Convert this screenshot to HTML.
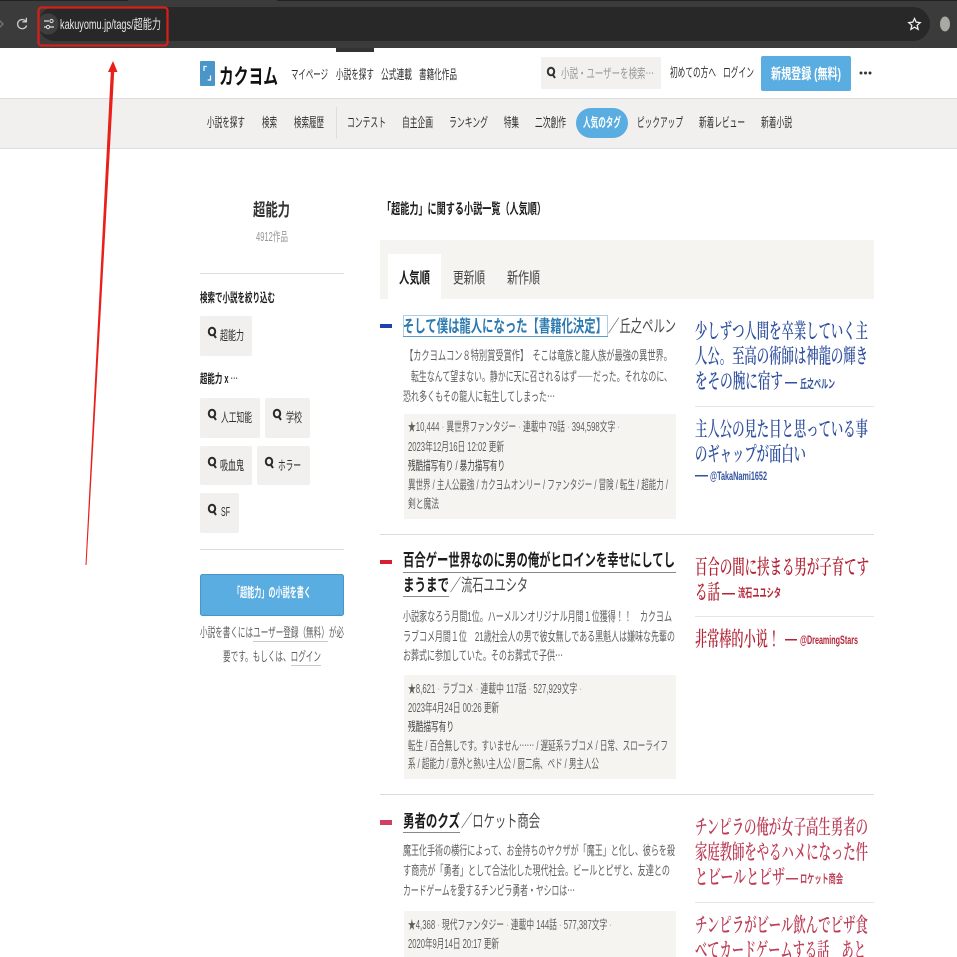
<!DOCTYPE html>
<html lang="ja"><head><meta charset="utf-8"><title>超能力 - カクヨム</title>
<style>
html,body{margin:0;padding:0;background:#fff;width:957px;height:957px;overflow:hidden}
svg{display:block;filter:blur(.3px)}
text{font-family:"Liberation Sans","Noto Sans CJK JP",sans-serif;font-size:13px;fill:#444;white-space:pre}
.n{font-size:13px;fill:#2e2e2e}
.s{font-size:13px;fill:#5e5e5e}
.m{font-size:12.5px;fill:#5e5e5e}
.b{font-weight:700;fill:#1c1c1c}
.a{font-size:17px;fill:#4a4a4a}
.q{font-family:"Noto Serif CJK SC","Liberation Serif",serif;font-size:20.5px;font-weight:600}
.bl{fill:#32529f}.re{fill:#b32536}.pk{fill:#bd3f58}
.u{font-size:12px;font-weight:700}
.w{fill:#fff;font-weight:700}
.c{font-family:"Noto Sans CJK JP",sans-serif}
.d{fill:#a8a8a8}
</style></head><body>
<svg xmlns="http://www.w3.org/2000/svg" width="957" height="957" viewBox="0 0 957 957">
<!-- browser chrome -->
<rect width="957" height="48" fill="#3b3b3b"/>
<rect x="0" y="0" width="128" height="1" fill="#222"/><rect x="277" y="0" width="680" height="1" fill="#222"/>
<rect x="38" y="7" width="892" height="34" rx="17" fill="#282828"/>
<path d="M-1 20l4 4-4 4" fill="none" stroke="#777" stroke-width="1.3"/>
<path d="M26 21.500a4.600 4.600 0 1 0 .6 4M26.400 17.800v4h-4" fill="none" stroke="#ccc" stroke-width="1.3"/>
<circle cx="48" cy="24" r="10.500" fill="#3e3e3e"/>
<path d="M44 21h5M50 27h4M44 27h2" stroke="#ddd" stroke-width="1.2"/><circle cx="51.500" cy="21" r="1.600" fill="none" stroke="#ddd"/><circle cx="48" cy="27" r="1.600" fill="none" stroke="#ddd"/>
<text x="60" y="29" textLength="101" lengthAdjust="spacingAndGlyphs" style="font-size:13.500px;fill:#e6e6e6">kakuyomu.jp/tags/超能力</text>
<rect x="38.500" y="7.500" width="129" height="38" rx="3" fill="none" stroke="#d8201a" stroke-width="2.200"/>
<path d="M914.500 18.500l1.700 3.700 4 .4-3 2.700.9 4-3.600-2.100-3.600 2.100.9-4-3-2.700 4-.4z" fill="none" stroke="#eee" stroke-width="1.300"/>
<ellipse cx="945" cy="24" rx="5" ry="7.500" fill="#a8a8a4"/>
<rect x="336" y="48" width="38" height="4" fill="#333"/>

<!-- header -->
<rect x="200" y="61" width="15" height="25" rx="1" fill="#4a96c8"/>
<path d="M204 71v-4.500h2.800M210.500 75.500v4.500h-2.800" fill="none" stroke="#fff" stroke-width="1.200"/>
<text x="219" y="84" textLength="59" lengthAdjust="spacingAndGlyphs" style="font-size:21.500px;fill:#111;font-weight:700">カクヨム</text>
<text class="n" x="291" y="79" textLength="37" lengthAdjust="spacingAndGlyphs">マイページ</text>
<text class="n" x="336" y="79" textLength="38" lengthAdjust="spacingAndGlyphs">小説を探す</text>
<text class="n" x="381" y="79" textLength="31" lengthAdjust="spacingAndGlyphs">公式連載</text>
<text class="n" x="419" y="79" textLength="38" lengthAdjust="spacingAndGlyphs">書籍化作品</text>
<rect x="541" y="57" width="120" height="32" fill="#f2f1ef"/>
<g fill="none" stroke="#333" stroke-width="2"><ellipse cx="551" cy="71.500" rx="3.200" ry="3.800"/><path d="M553 75l2 3"/></g>
<text x="561" y="78" textLength="93" lengthAdjust="spacingAndGlyphs" style="fill:#999">小説・ユーザーを検索<tspan class="c">…</tspan></text>
<text class="n" x="670" y="77" textLength="46" lengthAdjust="spacingAndGlyphs">初めての方へ</text>
<text class="n" x="723" y="77" textLength="31" lengthAdjust="spacingAndGlyphs">ログイン</text>
<rect x="761" y="56" width="90" height="35" rx="2" fill="#5aade0"/>
<text class="w" x="771" y="79" textLength="70" lengthAdjust="spacingAndGlyphs" style="font-size:14.500px">新規登録 (無料)</text>
<circle cx="861" cy="73" r="1.500" fill="#333"/><circle cx="865.500" cy="73" r="1.500" fill="#333"/><circle cx="870" cy="73" r="1.500" fill="#333"/>

<!-- subnav -->
<rect x="0" y="98" width="957" height="51" fill="#f1f0ee"/>
<rect x="0" y="98" width="957" height="1" fill="#dedede"/><rect x="0" y="148" width="957" height="1" fill="#dedede"/>
<rect x="336" y="107" width="1" height="32" fill="#dedede"/>
<text class="n" x="207" y="127" textLength="38" lengthAdjust="spacingAndGlyphs">小説を探す</text>
<text class="n" x="262" y="127" textLength="15" lengthAdjust="spacingAndGlyphs">検索</text>
<text class="n" x="294" y="127" textLength="30" lengthAdjust="spacingAndGlyphs">検索履歴</text>
<text class="n" x="347" y="127" textLength="39" lengthAdjust="spacingAndGlyphs">コンテスト</text>
<text class="n" x="402" y="127" textLength="31" lengthAdjust="spacingAndGlyphs">自主企画</text>
<text class="n" x="449" y="127" textLength="39" lengthAdjust="spacingAndGlyphs">ランキング</text>
<text class="n" x="504" y="127" textLength="15" lengthAdjust="spacingAndGlyphs">特集</text>
<text class="n" x="535" y="127" textLength="31" lengthAdjust="spacingAndGlyphs">二次創作</text>
<rect x="576" y="108" width="52" height="30" rx="15" fill="#5aade0"/>
<text class="w" x="583" y="127" textLength="38" lengthAdjust="spacingAndGlyphs">人気のタグ</text>
<text class="n" x="637" y="127" textLength="46" lengthAdjust="spacingAndGlyphs">ピックアップ</text>
<text class="n" x="699" y="127" textLength="46" lengthAdjust="spacingAndGlyphs">新着レビュー</text>
<text class="n" x="761" y="127" textLength="31" lengthAdjust="spacingAndGlyphs">新着小説</text>

<!-- sidebar -->
<text class="b" x="253" y="216" textLength="37" lengthAdjust="spacingAndGlyphs" style="font-size:17.500px;fill:#333">超能力</text>
<text x="256" y="241" textLength="32" lengthAdjust="spacingAndGlyphs" style="fill:#969696;font-size:12.500px">4912作品</text>
<rect x="200" y="273" width="144" height="1" fill="#dcdcdc"/>
<text x="200" y="302" textLength="75" lengthAdjust="spacingAndGlyphs" style="fill:#1c1c1c;font-weight:700;font-size:12.500px">検索で小説を絞り込む</text>
<rect x="200" y="316" width="52" height="40" rx="2" fill="#f1f0ee"/>
<text class="n" x="220" y="340" textLength="24" lengthAdjust="spacingAndGlyphs">超能力</text>
<text x="200" y="383" textLength="38" lengthAdjust="spacingAndGlyphs" style="fill:#1c1c1c;font-weight:700;font-size:12.500px">超能力 x <tspan class="c" style="font-weight:400">…</tspan></text>
<rect x="200" y="398" width="60" height="40" rx="2" fill="#f1f0ee"/>
<text class="n" x="221" y="422" textLength="31" lengthAdjust="spacingAndGlyphs">人工知能</text>
<rect x="265" y="398" width="45" height="40" rx="2" fill="#f1f0ee"/>
<text class="n" x="286" y="422" textLength="16" lengthAdjust="spacingAndGlyphs">学校</text>
<rect x="200" y="446" width="52" height="39" rx="2" fill="#f1f0ee"/>
<text class="n" x="220" y="470" textLength="24" lengthAdjust="spacingAndGlyphs">吸血鬼</text>
<rect x="257" y="446" width="53" height="39" rx="2" fill="#f1f0ee"/>
<text class="n" x="278" y="470" textLength="23" lengthAdjust="spacingAndGlyphs">ホラー</text>
<rect x="200" y="493" width="39" height="40" rx="2" fill="#f1f0ee"/>
<text class="n" x="221" y="516" textLength="9" lengthAdjust="spacingAndGlyphs">SF</text>
<g fill="none" stroke="#2a2a2a" stroke-width="2">
<g transform="translate(212,333)"><ellipse cx="0" cy="-1.500" rx="3.200" ry="3.800"/><path d="M2 2l2 3"/></g>
<g transform="translate(212,415)"><ellipse cx="0" cy="-1.500" rx="3.200" ry="3.800"/><path d="M2 2l2 3"/></g>
<g transform="translate(277,415)"><ellipse cx="0" cy="-1.500" rx="3.200" ry="3.800"/><path d="M2 2l2 3"/></g>
<g transform="translate(212,463)"><ellipse cx="0" cy="-1.500" rx="3.200" ry="3.800"/><path d="M2 2l2 3"/></g>
<g transform="translate(269,463)"><ellipse cx="0" cy="-1.500" rx="3.200" ry="3.800"/><path d="M2 2l2 3"/></g>
<g transform="translate(212,510)"><ellipse cx="0" cy="-1.500" rx="3.200" ry="3.800"/><path d="M2 2l2 3"/></g>
</g>
<rect x="200" y="549" width="144" height="1" fill="#dcdcdc"/>
<rect x="200.500" y="574.500" width="143" height="41" rx="2" fill="#5aade0" stroke="#4a94c6"/>
<text class="w" x="233" y="597" textLength="78" lengthAdjust="spacingAndGlyphs" style="font-size:13px">「超能力」の小説を書く</text>
<text x="200" y="637" textLength="144" lengthAdjust="spacingAndGlyphs" style="fill:#5e5e5e">小説を書くにはユーザー登録（無料）が必</text>
<text x="223" y="661" textLength="98" lengthAdjust="spacingAndGlyphs" style="fill:#5e5e5e">要です。もしくは、ログイン</text>
<rect x="253" y="641" width="75" height="1" fill="#c8c8c8"/><rect x="291" y="665" width="30" height="1" fill="#c8c8c8"/>

<!-- main heading/tabs -->
<text class="b" x="382" y="214" textLength="164" lengthAdjust="spacingAndGlyphs" style="font-size:14.500px">「超能力」に関する小説一覧（人気順）</text>
<rect x="380" y="240" width="494" height="59" fill="#f5f4f1"/>
<rect x="388" y="254" width="53" height="45" fill="#fff"/>
<text class="b" x="399" y="283" textLength="31" lengthAdjust="spacingAndGlyphs" style="font-size:15.500px">人気順</text>
<text x="453" y="283" textLength="32" lengthAdjust="spacingAndGlyphs" style="font-size:15.500px">更新順</text>
<text x="507" y="283" textLength="33" lengthAdjust="spacingAndGlyphs" style="font-size:15.500px">新作順</text>

<!-- item 1 -->
<rect x="380" y="324" width="12" height="4" fill="#2040b0"/>
<text class="b" x="403" y="332" textLength="204" lengthAdjust="spacingAndGlyphs" style="font-size:17px;fill:#2b7ab0">そして僕は龍人になった【書籍化決定】</text>
<rect x="403.500" y="315.500" width="204" height="21" fill="none" stroke="#5a9ccc" stroke-dasharray="1 1"/>
<rect x="403" y="336" width="205" height="1" fill="#5a9ccc"/>
<text class="a" x="608" y="332" textLength="68" lengthAdjust="spacingAndGlyphs">／丘之ペルン</text>
<text class="s" x="405" y="360" textLength="267" lengthAdjust="spacingAndGlyphs">【カクヨムコン８特別賞受賞作】　そこは竜族と龍人族が最強の異世界。</text>
<text class="s" x="411" y="381" textLength="261" lengthAdjust="spacingAndGlyphs">転生なんて望まない。静かに天に召されるはず<tspan class="c">――</tspan>だった。それなのに、</text>
<text class="s" x="403" y="401" textLength="152" lengthAdjust="spacingAndGlyphs">恐れ多くもその龍人に転生してしまった<tspan class="c">…</tspan></text>
<rect x="404" y="414" width="272" height="105" fill="#f5f4f1"/>
<text class="m" x="408" y="431" textLength="212" lengthAdjust="spacingAndGlyphs">★10,444 <tspan class="d">·</tspan> 異世界ファンタジー <tspan class="d">·</tspan> 連載中 79話 <tspan class="d">·</tspan> 394,598文字 <tspan class="d">·</tspan></text>
<text class="m" x="408" y="451" textLength="96" lengthAdjust="spacingAndGlyphs">2023年12月16日 12:02 更新</text>
<text class="m" x="408" y="470" textLength="97" lengthAdjust="spacingAndGlyphs" style="fill:#444">残酷描写有り / 暴力描写有り</text>
<text class="m" x="408" y="489" textLength="260" lengthAdjust="spacingAndGlyphs">異世界 / 主人公最強 / カクヨムオンリー / ファンタジー / 冒険 / 転生 / 超能力 /</text>
<text class="m" x="408" y="508" textLength="31" lengthAdjust="spacingAndGlyphs">剣と魔法</text>
<text class="q bl" x="695" y="338" textLength="173" lengthAdjust="spacingAndGlyphs">少しずつ人間を卒業していく主</text>
<text class="q bl" x="695" y="363" textLength="173" lengthAdjust="spacingAndGlyphs">人公。至高の術師は神龍の輝き</text>
<text class="q bl" x="695" y="388" textLength="88" lengthAdjust="spacingAndGlyphs">をその腕に宿す</text>
<rect x="785" y="382" width="12" height="1.500" fill="#32529f"/>
<text class="u bl" x="800" y="388" textLength="35" lengthAdjust="spacingAndGlyphs">丘之ペルン</text>
<rect x="695" y="406" width="179" height="1" fill="#e6e6e6"/>
<text class="q bl" x="695" y="436" textLength="173" lengthAdjust="spacingAndGlyphs">主人公の見た目と思っている事</text>
<text class="q bl" x="695" y="461" textLength="111" lengthAdjust="spacingAndGlyphs">のギャップが面白い</text>
<rect x="695" y="475" width="13" height="1.500" fill="#32529f"/>
<text class="u bl" x="710" y="480" textLength="57" lengthAdjust="spacingAndGlyphs">@TakaNami1652</text>
<rect x="380" y="534" width="494" height="1" fill="#dcdcdc"/>

<!-- item 2 -->
<rect x="380" y="560" width="12" height="4" fill="#d42030"/>
<text class="b" x="403" y="566" textLength="272" lengthAdjust="spacingAndGlyphs" style="font-size:17px">百合ゲー世界なのに男の俺がヒロインを幸せにしてし</text>
<rect x="403" y="572" width="273" height="1" fill="#888"/>
<text class="b" x="403" y="591" textLength="46" lengthAdjust="spacingAndGlyphs" style="font-size:17px">まうまで</text>
<rect x="403" y="596" width="46" height="1" fill="#888"/>
<text class="a" x="450" y="591" textLength="78" lengthAdjust="spacingAndGlyphs">／流石ユユシタ</text>
<text class="s" x="403" y="621" textLength="269" lengthAdjust="spacingAndGlyphs">小説家なろう月間1位。ハーメルンオリジナル月間１位獲得！！　カクヨム</text>
<text class="s" x="403" y="641" textLength="272" lengthAdjust="spacingAndGlyphs">ラブコメ月間１位　21歳社会人の男で彼女無しである黒魁人は嫌味な先輩の</text>
<text class="s" x="403" y="660" textLength="160" lengthAdjust="spacingAndGlyphs">お葬式に参加していた。そのお葬式で子供<tspan class="c">…</tspan></text>
<rect x="404" y="675" width="272" height="104" fill="#f5f4f1"/>
<text class="m" x="408" y="693" textLength="174" lengthAdjust="spacingAndGlyphs">★8,621 <tspan class="d">·</tspan> ラブコメ <tspan class="d">·</tspan> 連載中 117話 <tspan class="d">·</tspan> 527,929文字 <tspan class="d">·</tspan></text>
<text class="m" x="408" y="712" textLength="91" lengthAdjust="spacingAndGlyphs">2023年4月24日 00:26 更新</text>
<text class="m" x="408" y="731" textLength="46" lengthAdjust="spacingAndGlyphs" style="fill:#444">残酷描写有り</text>
<text class="m" x="408" y="750" textLength="260" lengthAdjust="spacingAndGlyphs">転生 / 百合無しです。すいません<tspan class="c">……</tspan> / 遅延系ラブコメ / 日常、スローライフ</text>
<text class="m" x="408" y="768" textLength="191" lengthAdjust="spacingAndGlyphs">系 / 超能力 / 意外と熱い主人公 / 厨二病、ペド / 男主人公</text>
<text class="q re" x="695" y="574" textLength="174" lengthAdjust="spacingAndGlyphs">百合の間に挟まる男が子育てす</text>
<text class="q re" x="695" y="599" textLength="25" lengthAdjust="spacingAndGlyphs">る話</text>
<rect x="722" y="593" width="13" height="1.500" fill="#b32536"/>
<text class="u re" x="738" y="597" textLength="43" lengthAdjust="spacingAndGlyphs">流石ユユシタ</text>
<rect x="695" y="616" width="179" height="1" fill="#e6e6e6"/>
<text class="q re" x="695" y="646" textLength="85" lengthAdjust="spacingAndGlyphs">非常棒的小说！</text>
<rect x="785" y="639" width="12" height="1.500" fill="#b32536"/>
<text class="u re" x="800" y="644" textLength="58" lengthAdjust="spacingAndGlyphs">@DreamingStars</text>
<rect x="380" y="794" width="494" height="1" fill="#dcdcdc"/>

<!-- item 3 -->
<rect x="380" y="820" width="12" height="5" fill="#d04060"/>
<text class="b" x="403" y="827" textLength="57" lengthAdjust="spacingAndGlyphs" style="font-size:17px">勇者のクズ</text>
<rect x="403" y="832" width="57" height="1" fill="#888"/>
<text class="a" x="461" y="827" textLength="79" lengthAdjust="spacingAndGlyphs">／ロケット商会</text>
<text class="s" x="403" y="855" textLength="272" lengthAdjust="spacingAndGlyphs">魔王化手術の横行によって、お金持ちのヤクザが「魔王」と化し、彼らを殺</text>
<text class="s" x="403" y="875" textLength="267" lengthAdjust="spacingAndGlyphs">す商売が「勇者」として合法化した現代社会。ビールとピザと、友達との</text>
<text class="s" x="403" y="895" textLength="172" lengthAdjust="spacingAndGlyphs">カードゲームを愛するチンピラ勇者・ヤシロは<tspan class="c">…</tspan></text>
<rect x="404" y="911" width="272" height="46" fill="#f5f4f1"/>
<text class="m" x="408" y="929" textLength="204" lengthAdjust="spacingAndGlyphs">★4,368 <tspan class="d">·</tspan> 現代ファンタジー <tspan class="d">·</tspan> 連載中 144話 <tspan class="d">·</tspan> 577,387文字 <tspan class="d">·</tspan></text>
<text class="m" x="408" y="948" textLength="91" lengthAdjust="spacingAndGlyphs">2020年9月14日 20:17 更新</text>
<text class="q pk" x="695" y="834" textLength="173" lengthAdjust="spacingAndGlyphs">チンピラの俺が女子高生勇者の</text>
<text class="q pk" x="695" y="859" textLength="173" lengthAdjust="spacingAndGlyphs">家庭教師をやるハメになった件</text>
<text class="q pk" x="695" y="884" textLength="90" lengthAdjust="spacingAndGlyphs">とビールとピザ</text>
<rect x="786" y="878" width="12" height="1.500" fill="#bd3f58"/>
<text class="u pk" x="800" y="883" textLength="43" lengthAdjust="spacingAndGlyphs">ロケット商会</text>
<rect x="695" y="902" width="179" height="1" fill="#e6e6e6"/>
<text class="q pk" x="695" y="932" textLength="173" lengthAdjust="spacingAndGlyphs">チンピラがビール飲んでピザ食</text>
<text class="q pk" x="695" y="957" textLength="171" lengthAdjust="spacingAndGlyphs">べてカードゲームする話　あと</text>

<!-- red arrow -->
<path d="M85.500 565L110.800 72h3.400L86.500 565z" fill="#e8201c"/>
<path d="M113 61l-5 11h9.500z" fill="#e8201c"/>
</svg>
</body></html>
